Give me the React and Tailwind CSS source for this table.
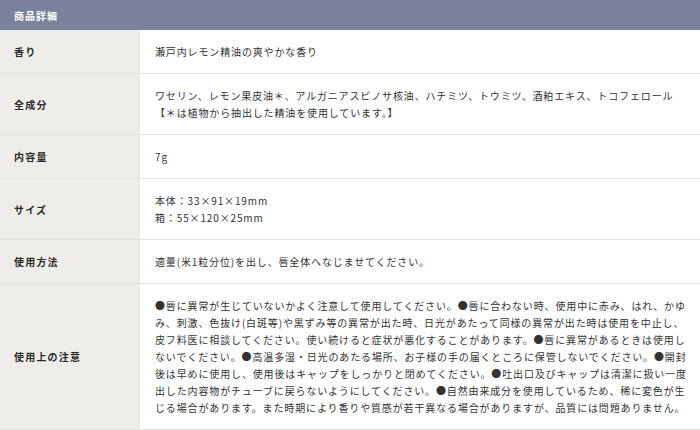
const rows = [
  { label: '香り', lines: ['瀬戸内レモン精油の爽やかな香り'] },
  {
    label: '全成分',
    lines: [
      'ワセリン、レモン果皮油＊、アルガニアスピノサ核油、ハチミツ、トウミツ、酒粕エキス、トコフェロール',
      '【＊は植物から抽出した精油を使用しています。】',
    ],
  },
  { label: '内容量', lines: ['7g'] },
  { label: 'サイズ', lines: ['本体：33×91×19mm', '箱：55×120×25mm'] },
  { label: '使用方法', lines: ['適量(米1粒分位)を出し、唇全体へなじませてください。'] },
  {
    label: '使用上の注意',
    lines: [
      '●唇に異常が生じていないかよく注意して使用してください。●唇に合わない時、使用中に赤み、はれ、かゆみ、刺激、色抜け(白斑等)や黒ずみ等の異常が出た時、日光があたって同様の異常が出た時は使用を中止し、皮フ料医に相談してください。使い続けると症状が悪化することがあります。●唇に異常があるときは使用しないでください。●高温多湿・日光のあたる場所、お子様の手の届くところに保管しないでください。●開封後は早めに使用し、使用後はキャップをしっかりと閉めてください。●吐出口及びキャップは清潔に扱い一度出した内容物がチューブに戻らないようにしてください。●自然由来成分を使用しているため、稀に変色が生じる場合があります。また時期により香りや質感が若干異なる場合がありますが、品質には問題ありません。',
    ],
  },
];

export default function App() {
  return (
    <div
      className="w-[700px] h-[430px] bg-white text-[#333] overflow-hidden"
      style={{ fontFamily: '"Noto Sans CJK JP", "Noto Sans", sans-serif' }}
    >
      {/* header */}
      <div className="h-[30px] bg-[#7b829b] flex items-center pl-[14px]">
        <span className="text-white text-[10px] font-bold tracking-[1px]">商品詳細</span>
      </div>

      <div className="flex flex-col">
        {rows.map((row) => (
          <div key={row.label} className="flex border-b-[1.5px] border-[#e4e3e0]">
            <div className="w-[140px] shrink-0 bg-[#efede9] flex items-center pl-[14px] border-r border-[#e8e6e2]">
              <span className="text-[10px] font-bold tracking-[1.2px] text-[#2a2a2a]">{row.label}</span>
            </div>
            <div className="flex-1 pl-[15px] pr-[10px] py-[13px] text-[10px] leading-[17px] tracking-[0.86px]">
              {row.lines.map((line, i) => (
                <p key={i}>{line}</p>
              ))}
            </div>
          </div>
        ))}
      </div>
    </div>
  );
}
